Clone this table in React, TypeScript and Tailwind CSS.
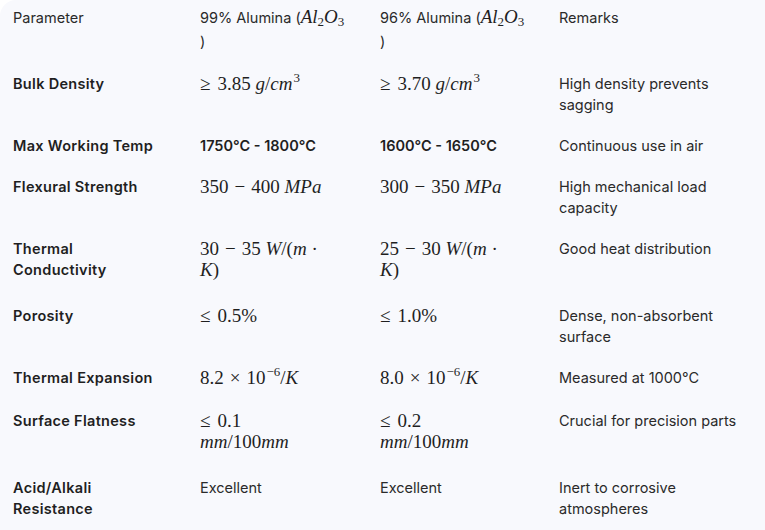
import React from "react";

const serif = "font-['Liberation_Serif','DejaVu_Serif',serif]";

// block of math, own line height
function M({ children, tall }: { children: React.ReactNode; tall?: boolean }) {
  return (
    <div className={`${serif} text-[19px] leading-[21px] text-[#1f1f1f] ${tall ? "pb-[5px]" : ""}`}>
      {children}
    </div>
  );
}

// inline math inside text
function IM({ children }: { children: React.ReactNode }) {
  return <span className={`${serif} text-[19px] leading-[23.5px] text-[#1f1f1f]`}>{children}</span>;
}

function I({ children }: { children: React.ReactNode }) {
  return <i className="italic">{children}</i>;
}

function Op({ children }: { children: React.ReactNode }) {
  return <span className="mx-[6px]">{children}</span>;
}

function Rel({ children }: { children: React.ReactNode }) {
  return <span className="mr-[7px]">{children}</span>;
}

function Sup({ children }: { children: React.ReactNode }) {
  return <span className="text-[13px] relative -top-[8px] ml-[1px]">{children}</span>;
}

function Sub({ children }: { children: React.ReactNode }) {
  return <span className="text-[13px] relative top-[3px]">{children}</span>;
}

const rows: { label: React.ReactNode; a: React.ReactNode; b: React.ReactNode; remark: string }[] = [
  {
    label: "Bulk Density",
    a: (
      <M>
        <Rel>≥</Rel>3.85 <I>g</I>/<I>cm</I>
        <Sup>3</Sup>
      </M>
    ),
    b: (
      <M>
        <Rel>≥</Rel>3.70 <I>g</I>/<I>cm</I>
        <Sup>3</Sup>
      </M>
    ),
    remark: "High density prevents sagging",
  },
  {
    label: "Max Working Temp",
    a: <span className="font-semibold text-[#1f1f1f]">1750°C - 1800°C</span>,
    b: <span className="font-semibold text-[#1f1f1f]">1600°C - 1650°C</span>,
    remark: "Continuous use in air",
  },
  {
    label: "Flexural Strength",
    a: (
      <M>
        350<Op>−</Op>400 <I>MPa</I>
      </M>
    ),
    b: (
      <M>
        300<Op>−</Op>350 <I>MPa</I>
      </M>
    ),
    remark: "High mechanical load capacity",
  },
  {
    label: (
      <>
        Thermal
        <br />
        Conductivity
      </>
    ),
    a: (
      <M tall>
        30<Op>−</Op>35 <I>W</I>/(<I>m</I> ·
        <br />
        <I>K</I>)
      </M>
    ),
    b: (
      <M tall>
        25<Op>−</Op>30 <I>W</I>/(<I>m</I> ·
        <br />
        <I>K</I>)
      </M>
    ),
    remark: "Good heat distribution",
  },
  {
    label: "Porosity",
    a: (
      <M>
        <Rel>≤</Rel>0.5%
      </M>
    ),
    b: (
      <M>
        <Rel>≤</Rel>1.0%
      </M>
    ),
    remark: "Dense, non-absorbent surface",
  },
  {
    label: "Thermal Expansion",
    a: (
      <M>
        8.2<Op>×</Op>10<Sup>−6</Sup>/<I>K</I>
      </M>
    ),
    b: (
      <M>
        8.0<Op>×</Op>10<Sup>−6</Sup>/<I>K</I>
      </M>
    ),
    remark: "Measured at 1000°C",
  },
  {
    label: "Surface Flatness",
    a: (
      <M tall>
        <Rel>≤</Rel>0.1
        <br />
        <I>mm</I>/100<I>mm</I>
      </M>
    ),
    b: (
      <M tall>
        <Rel>≤</Rel>0.2
        <br />
        <I>mm</I>/100<I>mm</I>
      </M>
    ),
    remark: "Crucial for precision parts",
  },
  {
    label: (
      <>
        Acid/Alkali
        <br />
        Resistance
      </>
    ),
    a: "Excellent",
    b: "Excellent",
    remark: "Inert to corrosive atmospheres",
  },
];

function Alumina({ pct }: { pct: string }) {
  return (
    <>
      {pct} Alumina (
      <IM>
        <I>Al</I>
        <Sub>2</Sub>
        <I>O</I>
        <Sub>3</Sub>
      </IM>
      <br />)
    </>
  );
}

export default function App() {
  return (
    <div className="w-[765px] h-[530px] bg-white overflow-hidden">
      <div className="bg-[#f8f9fd] rounded-tl-2xl h-full font-['Inter','Noto_Sans',sans-serif] text-[14.5px] leading-[21px] text-[#2a2a2a]">
        <table className="table-fixed w-[765px] border-collapse">
          <colgroup>
            <col className="w-[188px]" />
            <col className="w-[180px]" />
            <col className="w-[179px]" />
            <col className="w-[218px]" />
          </colgroup>
          <thead>
            <tr className="align-top">
              <th className="text-left font-normal pl-[13px] pr-3 pt-[7px] pb-[11px]">Parameter</th>
              <th className="text-left font-normal px-3 pt-[5px] pb-[11px]">
                <Alumina pct="99%" />
              </th>
              <th className="text-left font-normal px-3 pt-[5px] pb-[11px]">
                <Alumina pct="96%" />
              </th>
              <th className="text-left font-normal px-3 pt-[7px] pb-[11px]">Remarks</th>
            </tr>
          </thead>
          <tbody>
            {rows.map((r, i) => (
              <tr key={i} className="align-top">
                <td className="pl-[13px] pr-3 py-[10px] font-semibold tracking-[0.3px] text-[#1f1f1f]">{r.label}</td>
                <td className="px-3 py-[10px]">{r.a}</td>
                <td className="px-3 py-[10px]">{r.b}</td>
                <td className="px-3 py-[10px] pr-4">{r.remark}</td>
              </tr>
            ))}
          </tbody>
        </table>
      </div>
    </div>
  );
}
